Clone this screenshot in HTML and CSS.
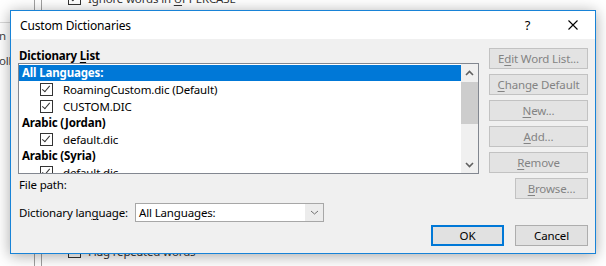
FILE: index.html
```html
<!DOCTYPE html>
<html lang="en">
<head>
    <meta charset="UTF-8">
    <meta name="viewport" content="width=device-width, initial-scale=1.0">
    <title>Custom Dictionaries</title>
    <link rel="stylesheet" href="styles.css">
</head>
<body>
    <!-- Options window behind the dialog -->
    <div class="backdrop">
        <div class="side">
            <div class="side-rule"></div>
            <div class="side-text first">n</div>
            <div class="side-text second">olb</div>
        </div>
        <div class="gutter"></div>
        <div class="options">
            <div class="option top">
                <span class="box checked"></span>
                <span>Ignore words in <u>U</u>PPERCASE</span>
            </div>
            <div class="option bottom">
                <span class="box"></span>
                <span>Flag repeated words</span>
            </div>
        </div>
    </div>

    <div class="dialog">
        <div class="titlebar">
            <div class="title">Custom Dictionaries</div>
            <div class="tb-button">?</div>
            <div class="tb-button">
                <svg width="10" height="10" viewBox="0 0 10 10"><path d="M0.5 0.5 L9.5 9.5 M9.5 0.5 L0.5 9.5" stroke="#000" stroke-width="1.1" fill="none"/></svg>
            </div>
        </div>

        <div class="content">
            <div class="left">
                <div class="label bold">Dictionary <u>L</u>ist</div>
                <div class="listbox">
                    <div class="list-items">
                        <div class="group selected">All Languages:</div>
                        <div class="item"><span class="box checked"></span>RoamingCustom.dic (Default)</div>
                        <div class="item"><span class="box checked"></span>CUSTOM.DIC</div>
                        <div class="group">Arabic (Jordan)</div>
                        <div class="item"><span class="box checked"></span>default.dic</div>
                        <div class="group">Arabic (Syria)</div>
                        <div class="item"><span class="box checked"></span>default.dic</div>
                    </div>
                    <div class="scrollbar">
                        <div class="arrow">
                            <svg width="9" height="6" viewBox="0 0 9 6"><path d="M1 5 L4.5 1.5 L8 5" stroke="#606060" stroke-width="1.6" fill="none"/></svg>
                        </div>
                        <div class="thumb"></div>
                        <div class="track"></div>
                        <div class="arrow">
                            <svg width="9" height="6" viewBox="0 0 9 6"><path d="M1 1 L4.5 4.5 L8 1" stroke="#606060" stroke-width="1.6" fill="none"/></svg>
                        </div>
                    </div>
                </div>
                <div class="label path">File path:</div>
                <div class="lang-row">
                    <div class="lang-label">Dictionary lan<u>g</u>uage:</div>
                    <div class="combo">
                        <div class="combo-value">All Languages:</div>
                        <div class="combo-btn">
                            <svg width="9" height="5" viewBox="0 0 9 5"><path d="M1 1 L4.5 4 L8 1" stroke="#707070" stroke-width="1" fill="none"/></svg>
                        </div>
                    </div>
                </div>
            </div>

            <div class="actions">
                <button class="btn wide" disabled>E<u>d</u>it Word List...</button>
                <button class="btn wide" disabled><u>C</u>hange Default</button>
                <button class="btn wide" disabled><u>N</u>ew...</button>
                <button class="btn wide" disabled><u>A</u>dd...</button>
                <button class="btn wide" disabled><u>R</u>emove</button>
                <button class="btn" disabled><u>B</u>rowse...</button>
            </div>
        </div>

        <div class="footer">
            <button class="btn default">OK</button>
            <button class="btn">Cancel</button>
        </div>
    </div>
</body>
</html>
```

FILE: styles.css
```css
body {
    margin: 0;
    width: 606px;
    height: 266px;
    overflow: hidden;
    position: relative;
    background-color: #fff;
    font-family: "Segoe UI", "Noto Sans", sans-serif;
    font-size: 11.5px;
    letter-spacing: -0.15px;
    color: #000;
}
u {
    text-underline-offset: 2px;
}

/* window behind */
.backdrop {
    display: flex;
    height: 266px;
}
.side {
    width: 34px;
    border-right: 1px solid #a0a0a0;
    color: #444;
}
.side-rule {
    margin-top: 22px;
    border-top: 1px solid #d9d9d9;
}
.side-text {
    margin-left: -1px;
    line-height: 15px;
}
.side-text.first {
    margin-top: 5px;
}
.side-text.second {
    margin-top: 10px;
}
.gutter {
    width: 6px;
    border-right: 1px solid #a0a0a0;
}
.options {
    padding-left: 26px;
    color: #333;
}
.option {
    display: flex;
    align-items: center;
    gap: 7px;
    height: 15px;
    white-space: nowrap;
}
.option.top {
    margin-top: -9px;
}
.option.bottom {
    margin-top: 238px;
}

.box {
    display: inline-block;
    box-sizing: border-box;
    width: 13px;
    height: 13px;
    border: 1px solid #333;
    background-color: #fff;
    flex-shrink: 0;
    position: relative;
}
.box.checked::after {
    content: "";
    position: absolute;
    left: 3px;
    top: 0px;
    width: 3px;
    height: 7px;
    border-right: 1px solid #333;
    border-bottom: 1px solid #333;
    transform: rotate(40deg);
}

/* dialog */
.dialog {
    position: absolute;
    left: 10px;
    top: 10px;
    width: 584px;
    height: 242px;
    border: 1px solid #1883d7;
    background-color: #f0f0f0;
    box-shadow: 0 2px 14px rgba(0, 0, 0, 0.35);
}
.titlebar {
    display: flex;
    align-items: center;
    height: 28px;
    background-color: #fff;
}
.title {
    flex: 1;
    padding-left: 9px;
    font-size: 12px;
}
.tb-button {
    width: 45px;
    height: 28px;
    display: flex;
    justify-content: center;
    align-items: center;
    font-size: 13px;
}
.tb-button svg {
    display: block;
}

.content {
    display: grid;
    grid-template-columns: 461px 99px;
    column-gap: 10px;
    padding: 9px 7px 0 7px;
}
.label {
    height: 15px;
    line-height: 15px;
    padding-left: 1px;
    white-space: nowrap;
}
.bold {
    font-weight: bold;
}
.label.path {
    margin-top: 3px;
}

.listbox {
    display: flex;
    height: 109px;
    border: 1px solid #828790;
    background-color: #fff;
}
.list-items {
    flex: 1;
    padding-top: 1px;
    overflow: hidden;
    white-space: nowrap;
}
.group {
    height: 16px;
    line-height: 16px;
    padding-left: 3px;
    font-weight: bold;
}
.group.selected {
    background-color: #0078d7;
    color: #fff;
}
.item {
    display: flex;
    align-items: center;
    height: 17px;
    padding-left: 21px;
    gap: 10px;
}
.scrollbar {
    width: 17px;
    display: flex;
    flex-direction: column;
    background-color: #f0f0f0;
}
.arrow {
    height: 17px;
    display: flex;
    justify-content: center;
    align-items: center;
}
.arrow svg {
    display: block;
}
.thumb {
    height: 42px;
    margin-top: 1px;
    background-color: #cdcdcd;
}
.track {
    flex: 1;
}

.lang-row {
    display: flex;
    align-items: center;
    margin-top: 11px;
    height: 19px;
}
.lang-label {
    width: 116px;
    padding-left: 1px;
    white-space: nowrap;
}
.combo {
    display: flex;
    width: 187px;
    height: 17px;
    border: 1px solid #a7a7a7;
}
.combo-value {
    flex: 1;
    background-color: #fff;
    padding-left: 3px;
    line-height: 17px;
}
.combo-btn {
    width: 18px;
    display: flex;
    justify-content: center;
    align-items: center;
    background-color: #ececec;
}
.combo-btn svg {
    display: block;
}

.actions {
    display: flex;
    flex-direction: column;
    align-items: flex-end;
    gap: 5px;
}
.btn {
    box-sizing: border-box;
    width: 73px;
    height: 21px;
    padding: 0;
    font-family: inherit;
    font-size: 11.5px;
    letter-spacing: -0.15px;
    white-space: nowrap;
    color: #000;
    background-color: #e1e1e1;
    border: 1px solid #adadad;
    border-radius: 0;
}
.btn.wide {
    width: 99px;
}
.btn:disabled {
    color: #838383;
    background-color: #e3e3e3;
    border-color: #c2c2c2;
}
.btn.default {
    border: 2px solid #0078d7;
}

.footer {
    display: flex;
    justify-content: flex-end;
    gap: 11px;
    margin-top: 3px;
    padding-right: 7px;
}
```
